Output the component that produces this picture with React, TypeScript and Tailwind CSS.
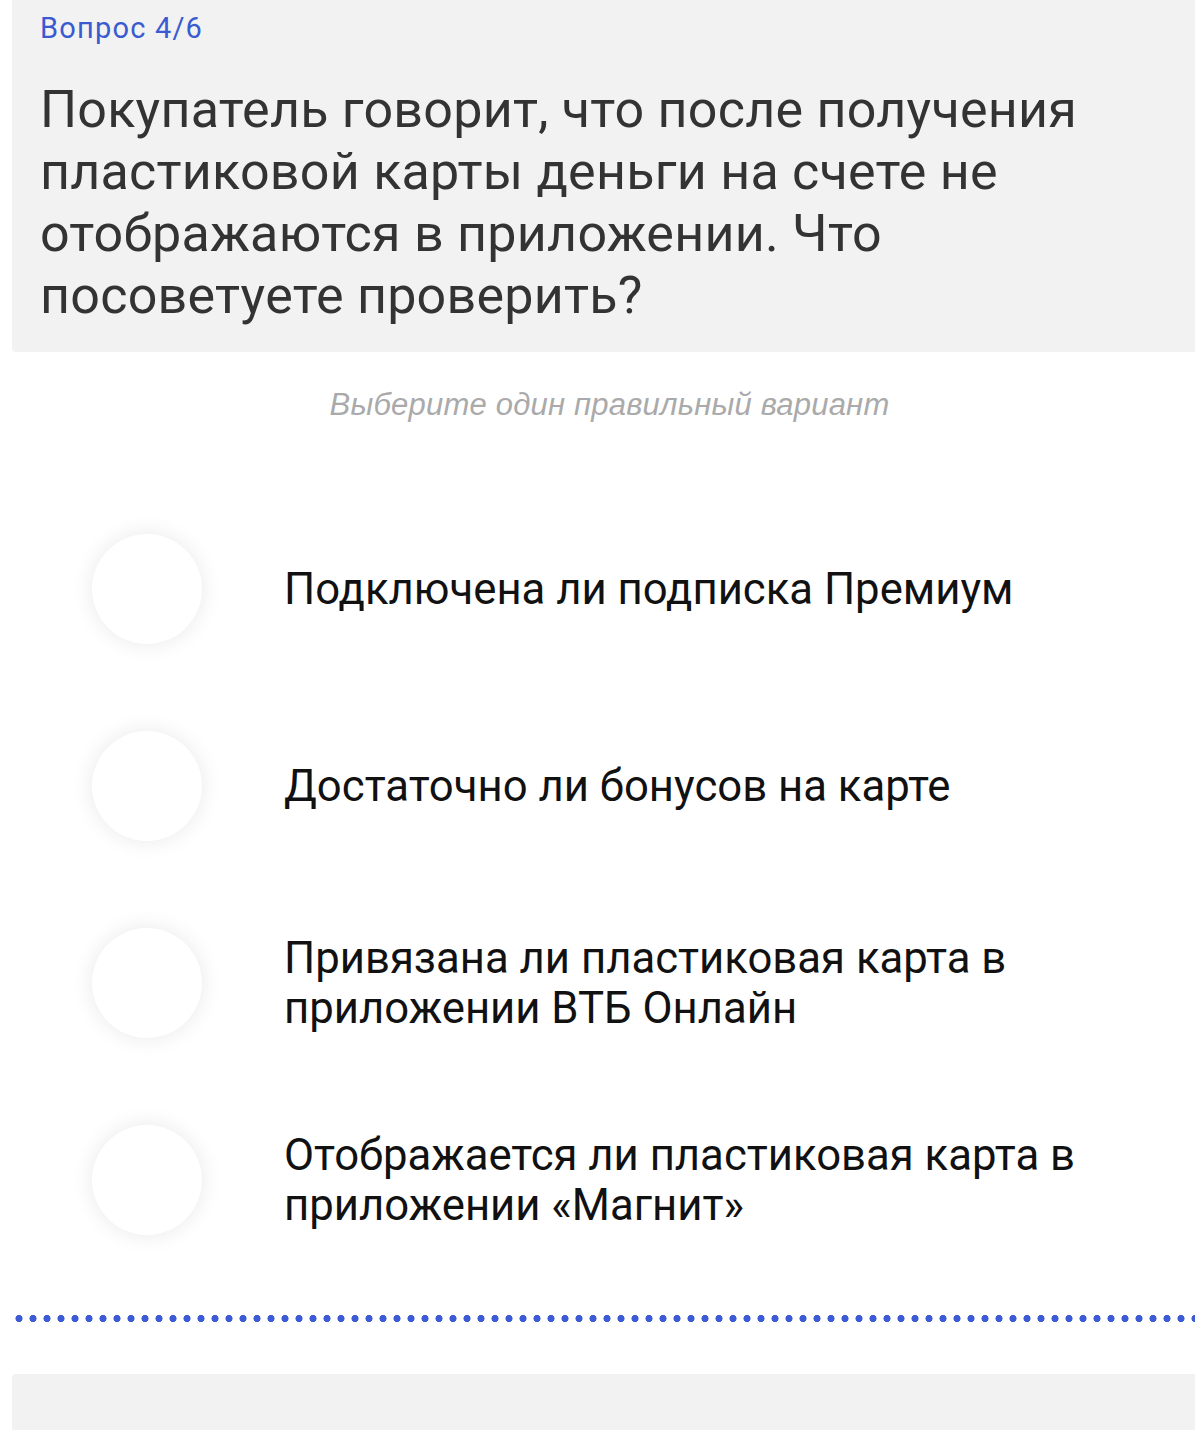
import React from "react";

const options = [
  ["Подключена ли подписка Премиум"],
  ["Достаточно ли бонусов на карте"],
  ["Привязана ли пластиковая карта в", "приложении ВТБ Онлайн"],
  ["Отображается ли пластиковая карта в", "приложении «Магнит»"],
];

export default function App() {
  return (
    <div className="w-[1195px] h-[1430px] overflow-hidden bg-white font-['Roboto',sans-serif]">
      <div className="ml-[12px] bg-[#f2f2f2] rounded-bl-[4px] pl-[28px] pt-[11px] pb-[25px]">
        <div className="text-[29px] leading-[34px] tracking-[1.2px] text-[#3a5bd0]">Вопрос 4/6</div>
        <h1 className="mt-[34px] text-[52px] leading-[62px] tracking-[0.25px] text-[#333333] font-normal">
          Покупатель говорит, что после получения
          <br />
          пластиковой карты деньги на счете не
          <br />
          отображаются в приложении. Что
          <br />
          посоветуете проверить?
        </h1>
      </div>
      <div className="mt-[36px] text-center text-[31px] leading-[34px] tracking-[0.2px] italic text-[#aaaaab] pl-[24px] font-['Liberation_Sans',Arial,sans-serif]">
        Выберите один правильный вариант
      </div>
      <div className="mt-[68px]">
        {options.map((lines, i) => (
          <div key={i} className="h-[197px] flex items-center pl-[92px]">
            <div className="w-[110px] h-[110px] shrink-0 rounded-full bg-white shadow-[0_0_22px_rgba(0,0,0,0.09)]" />
            <div className="ml-[82px] text-[43.7px] leading-[50px] text-[#111111]">
              {lines.map((l, j) => (
                <div key={j}>{l}</div>
              ))}
            </div>
          </div>
        ))}
      </div>
      <div className="mt-[37px] ml-[12px] h-[7px] bg-[radial-gradient(circle,#3d5bd6_3.3px,transparent_3.8px)] bg-[length:14px_7px]" />
      <div className="mt-[52px] ml-[12px] h-[80px] bg-[#f2f2f2] rounded-tl-[4px]" />
    </div>
  );
}
